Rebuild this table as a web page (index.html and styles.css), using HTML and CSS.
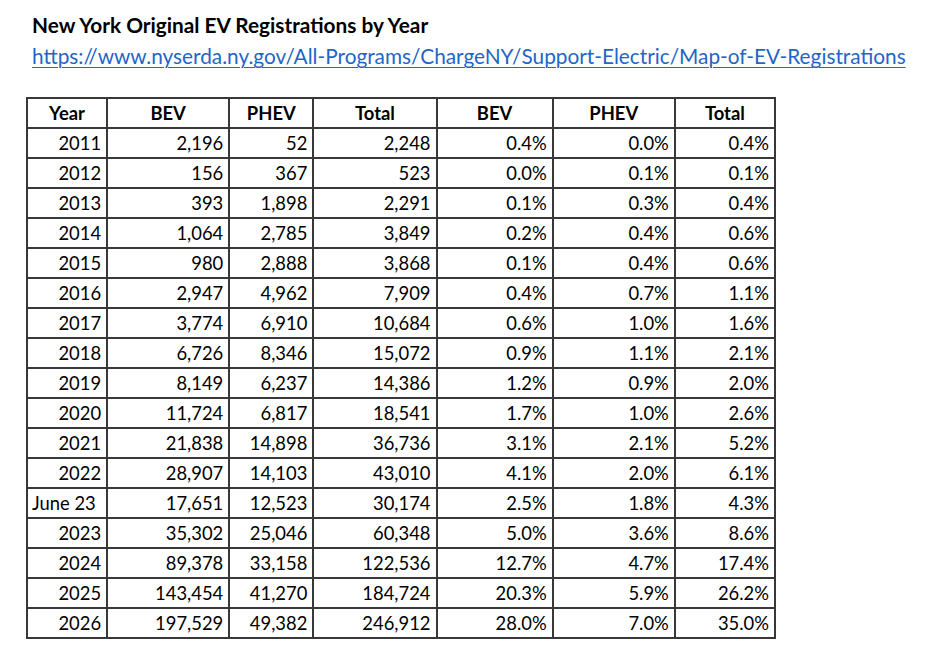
FILE: index.html
```html
<!DOCTYPE html>
<html lang="en">
<head>
<meta charset="utf-8">
<title>New York Original EV Registrations by Year</title>
<link rel="stylesheet" href="styles.css">
</head>
<body>
<div class="page">
  <h1 class="title">New York Original EV Registrations by Year</h1>
  <a class="source" href="https://www.nyserda.ny.gov/All-Programs/ChargeNY/Support-Electric/Map-of-EV-Registrations">https://www.nyserda.ny.gov/All-Programs/ChargeNY/Support-Electric/Map-of-EV-Registrations</a>
  <table class="grid">
    <colgroup>
      <col class="c-year"><col class="c-bev"><col class="c-phev"><col class="c-total">
      <col class="c-pbev"><col class="c-pphev"><col class="c-ptotal">
    </colgroup>
    <thead>
      <tr><th>Year</th><th>BEV</th><th>PHEV</th><th>Total</th><th>BEV</th><th>PHEV</th><th>Total</th></tr>
    </thead>
    <tbody>
      <tr><td>2011</td><td>2,196</td><td>52</td><td>2,248</td><td>0.4%</td><td>0.0%</td><td>0.4%</td></tr>
      <tr><td>2012</td><td>156</td><td>367</td><td>523</td><td>0.0%</td><td>0.1%</td><td>0.1%</td></tr>
      <tr><td>2013</td><td>393</td><td>1,898</td><td>2,291</td><td>0.1%</td><td>0.3%</td><td>0.4%</td></tr>
      <tr><td>2014</td><td>1,064</td><td>2,785</td><td>3,849</td><td>0.2%</td><td>0.4%</td><td>0.6%</td></tr>
      <tr><td>2015</td><td>980</td><td>2,888</td><td>3,868</td><td>0.1%</td><td>0.4%</td><td>0.6%</td></tr>
      <tr><td>2016</td><td>2,947</td><td>4,962</td><td>7,909</td><td>0.4%</td><td>0.7%</td><td>1.1%</td></tr>
      <tr><td>2017</td><td>3,774</td><td>6,910</td><td>10,684</td><td>0.6%</td><td>1.0%</td><td>1.6%</td></tr>
      <tr><td>2018</td><td>6,726</td><td>8,346</td><td>15,072</td><td>0.9%</td><td>1.1%</td><td>2.1%</td></tr>
      <tr><td>2019</td><td>8,149</td><td>6,237</td><td>14,386</td><td>1.2%</td><td>0.9%</td><td>2.0%</td></tr>
      <tr><td>2020</td><td>11,724</td><td>6,817</td><td>18,541</td><td>1.7%</td><td>1.0%</td><td>2.6%</td></tr>
      <tr><td>2021</td><td>21,838</td><td>14,898</td><td>36,736</td><td>3.1%</td><td>2.1%</td><td>5.2%</td></tr>
      <tr><td>2022</td><td>28,907</td><td>14,103</td><td>43,010</td><td>4.1%</td><td>2.0%</td><td>6.1%</td></tr>
      <tr><td class="label">June 23</td><td>17,651</td><td>12,523</td><td>30,174</td><td>2.5%</td><td>1.8%</td><td>4.3%</td></tr>
      <tr><td>2023</td><td>35,302</td><td>25,046</td><td>60,348</td><td>5.0%</td><td>3.6%</td><td>8.6%</td></tr>
      <tr><td>2024</td><td>89,378</td><td>33,158</td><td>122,536</td><td>12.7%</td><td>4.7%</td><td>17.4%</td></tr>
      <tr><td>2025</td><td>143,454</td><td>41,270</td><td>184,724</td><td>20.3%</td><td>5.9%</td><td>26.2%</td></tr>
      <tr><td>2026</td><td>197,529</td><td>49,382</td><td>246,912</td><td>28.0%</td><td>7.0%</td><td>35.0%</td></tr>
    </tbody>
  </table>
</div>
</body>
</html>
```
FILE: styles.css
```css
html, body {
  margin: 0;
  padding: 0;
  background: #ffffff;
}

body {
  font-family: Lato, "Liberation Sans", sans-serif;
  color: #000000;
}

.page {
  display: flex;
  flex-direction: column;
  align-items: flex-start;
  padding: 10px 0 0 26px;
}

.title {
  margin: 0 0 0 6px;
  font-size: 20.8px;
  font-weight: 700;
  line-height: 29px;
}

.source {
  margin: 2px 0 0 6px;
  font-size: 20.8px;
  line-height: 29px;
  color: #1f66c8;
  text-decoration: underline;
  text-underline-offset: 3px;
  text-decoration-thickness: 1px;
}

.grid {
  margin-top: 27px;
  border-collapse: collapse;
  table-layout: fixed;
  width: 750px;
  font-size: 18.4px;
}

.c-year { width: 80px; }
.c-bev { width: 122px; }
.c-phev { width: 84px; }
.c-total { width: 123px; }
.c-pbev { width: 116px; }
.c-pphev { width: 122px; }
.c-ptotal { width: 100px; }

.grid th,
.grid td {
  border: 2px solid #383838;
  height: 28px;
  padding: 0 5px 0 3px;
  line-height: 28px;
  text-align: right;
  white-space: nowrap;
  box-sizing: border-box;
}

.grid th {
  font-weight: 700;
  text-align: center;
  padding: 0;
}

.grid td.label {
  text-align: left;
  padding-left: 4px;
}
```
